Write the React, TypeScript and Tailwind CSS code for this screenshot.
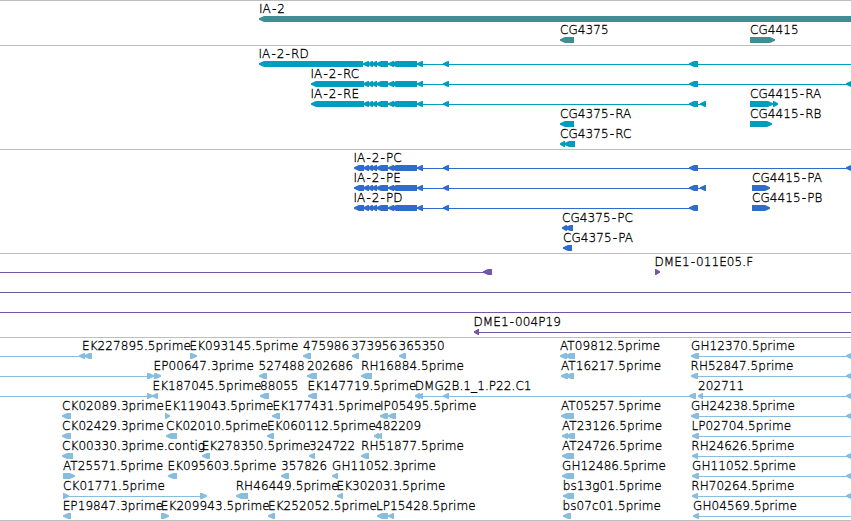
type Strand = "<" | ">";
type Block = [Strand, number, number];

interface Row {
  labels?: [number, string][];
  lines?: [number, number][];
  blocks?: Block[];
}

interface Track {
  name: string;
  color: string;
  className: string;
  rows: Row[];
}

const WIDTH = 851;

// exons shared by every IA-2 transcript
const ia2Exons: Block[] = [
  ["<", 363, 369],
  ["<", 367.5, 373],
  ["<", 371.5, 377],
  ["<", 376, 388],
  ["<", 388, 394],
  ["<", 391, 417],
  ["<", 417, 423],
  ["<", 443, 449],
];

const edge: Block = ["<", 846, 853];

const tracks: Track[] = [
  {
    name: "genes",
    color: "#3e8e94",
    className: "gap-px pb-[3px]",
    rows: [
      { labels: [[259, "IA-2"]], blocks: [["<", 259, 860]] },
      {
        labels: [[560, "CG4375"], [750, "CG4415"]],
        blocks: [["<", 560, 574], [">", 750, 775]],
      },
    ],
  },
  {
    name: "transcripts",
    color: "#009dbe",
    className: "pb-[3px]",
    rows: [
      {
        labels: [[258.5, "IA-2-RD"]],
        lines: [[363, WIDTH]],
        blocks: [["<", 259, 363], ...ia2Exons, ["<", 689, 698]],
      },
      {
        labels: [[310.5, "IA-2-RC"]],
        lines: [[363, WIDTH]],
        blocks: [["<", 311, 364], ...ia2Exons, ["<", 689, 698], edge],
      },
      {
        labels: [[310.5, "IA-2-RE"], [750, "CG4415-RA"]],
        lines: [[363, 706]],
        blocks: [["<", 311, 364], ...ia2Exons, ["<", 689, 698], ["<", 700, 706], [">", 750, 773], [">", 773, 778]],
      },
      {
        labels: [[560, "CG4375-RA"], [750, "CG4415-RB"]],
        blocks: [["<", 560, 574], [">", 750, 772]],
      },
      {
        labels: [[560, "CG4375-RC"]],
        blocks: [["<", 560, 565], ["<", 564, 575]],
      },
    ],
  },
  {
    name: "proteins",
    color: "#2f6ccc",
    className: "pb-[3px]",
    rows: [
      {
        labels: [[353.5, "IA-2-PC"]],
        lines: [[363, WIDTH]],
        blocks: [["<", 354, 364], ...ia2Exons, ["<", 689, 698], edge],
      },
      {
        labels: [[353.5, "IA-2-PE"], [752, "CG4415-PA"]],
        lines: [[363, 706]],
        blocks: [["<", 354, 364], ...ia2Exons, ["<", 689, 698], ["<", 700, 706], [">", 752, 770]],
      },
      {
        labels: [[353.5, "IA-2-PD"], [752, "CG4415-PB"]],
        lines: [[363, 698]],
        blocks: [["<", 354, 364], ...ia2Exons, ["<", 689, 698], [">", 752, 770]],
      },
      { labels: [[562, "CG4375-PC"]], blocks: [["<", 562, 567], ["<", 565, 573]] },
      { labels: [[563, "CG4375-PA"]], blocks: [["<", 563, 572]] },
    ],
  },
  {
    name: "bac-ends",
    color: "#7557a8",
    className: "pb-[3px]",
    rows: [
      {
        labels: [[654.5, "DME1-011E05.F"]],
        lines: [[0, 484]],
        blocks: [["<", 483, 492], [">", 655, 660]],
      },
      { lines: [[0, WIDTH]] },
      { lines: [[0, WIDTH]] },
      {
        labels: [[473.5, "DME1-004P19"]],
        lines: [[476, WIDTH]],
        blocks: [["<", 474, 479]],
      },
    ],
  },
  {
    name: "ests",
    color: "#88bddd",
    className: "pb-[2px]",
    rows: [
      {
        labels: [[82, "EK227895.5prime"], [189.5, "EK093145.5prime"], [303, "475986"], [351, "373956"], [398.5, "365350"], [560, "AT09812.5prime"], [691, "GH12370.5prime"]],
        lines: [[0, 82], [695, WIDTH]],
        blocks: [["<", 79, 85], ["<", 84, 92], [">", 190, 197], ["<", 303, 311], ["<", 352, 359], ["<", 399, 406], ["<", 560, 567], ["<", 565, 575], ["<", 691, 699], edge],
      },
      {
        labels: [[153.5, "EP00647.3prime"], [258.5, "527488"], [307, "202686"], [361, "RH16884.5prime"], [561, "AT16217.5prime"], [690.5, "RH52847.5prime"]],
        lines: [[0, 149], [695, WIDTH]],
        blocks: [[">", 147, 154], [">", 154, 161], ["<", 259, 267], ["<", 307, 317], ["<", 361, 372], ["<", 561, 568], ["<", 566, 574], ["<", 691, 698], edge],
      },
      {
        labels: [[152.5, "EK187045.5prime"], [260, "88055"], [307.5, "EK147719.5prime"], [414.7, "DMG2B.1_1.P22.C1"], [698, "202711"]],
        lines: [[0, 149], [418, 694], [701, WIDTH]],
        blocks: [[">", 147, 153], ["<", 152, 158], ["<", 260, 269], ["<", 308, 317], ["<", 415, 420], ["<", 418, 423], ["<", 443, 449], ["<", 689, 696], ["<", 698, 703], edge],
      },
      {
        labels: [[62, "CK02089.3prime"], [164.5, "EK119043.5prime"], [272.5, "EK177431.5prime"], [380, "IP05495.5prime"], [561, "AT05257.5prime"], [691, "GH24238.5prime"]],
        lines: [[695, WIDTH]],
        blocks: [["<", 62, 71], [">", 165, 170], ["<", 272, 280], ["<", 380, 388], ["<", 388, 396], ["<", 561, 574], ["<", 691, 699], edge],
      },
      {
        labels: [[62, "CK02429.3prime"], [166, "CK02010.5prime"], [267, "EK060112.5prime"], [375, "482209"], [562, "AT23126.5prime"], [691.5, "LP02704.5prime"]],
        lines: [[695, WIDTH]],
        blocks: [["<", 62, 71], ["<", 166, 177], ["<", 267, 274], ["<", 374, 379], ["<", 377, 382], ["<", 562, 568], ["<", 566, 575], ["<", 692, 699]],
      },
      {
        labels: [[62, "CK00330.3prime.contig"], [201.7, "EK278350.5prime"], [309, "324722"], [361, "RH51877.5prime"], [562, "AT24726.5prime"], [691.3, "RH24626.5prime"]],
        lines: [[695, WIDTH]],
        blocks: [["<", 62, 73], ["<", 202, 210], ["<", 309, 315], ["<", 361, 369], ["<", 562, 574], ["<", 692, 698], edge],
      },
      {
        labels: [[63, "AT25571.5prime"], [167.5, "EK095603.5prime"], [281, "357826"], [332, "GH11052.3prime"], [562, "GH12486.5prime"], [692, "GH11052.5prime"]],
        lines: [[695, WIDTH]],
        blocks: [[">", 63, 75], ["<", 168, 177], ["<", 281, 289], ["<", 332, 338], ["<", 562, 574], ["<", 692, 699], edge],
      },
      {
        labels: [[63, "CK01771.5prime"], [235.7, "RH46449.5prime"], [336.5, "EK302031.5prime"], [562.7, "bs13g01.5prime"], [691.3, "RH70264.5prime"]],
        lines: [[65, 204], [695, WIDTH]],
        blocks: [[">", 63, 69], [">", 200, 207], ["<", 236, 248], ["<", 337, 343], ["<", 563, 574], ["<", 692, 698], edge],
      },
      {
        labels: [[62.7, "EP19847.3prime"], [160.8, "EK209943.5prime"], [268, "EK252052.5prime"], [376, "LP15428.5prime"], [562.5, "bs07c01.5prime"], [693, "GH04569.5prime"]],
        lines: [[696, WIDTH]],
        blocks: [["<", 63, 71], [">", 161, 169], ["<", 268, 275], ["<", 377, 388], ["<", 388, 394], ["<", 563, 571], ["<", 693, 699]],
      },
    ],
  },
];

// block with a blunt arrow head on the side the strand runs to
function points([strand, x0, x1]: Block) {
  const head = Math.min(5, x1 - x0 - 1);
  if (strand === "<") {
    return `${x0},2.3 ${x0 + head},0 ${x1},0 ${x1},6 ${x0 + head},6 ${x0},3.7`;
  }
  return `${x1},2.3 ${x1 - head},0 ${x0},0 ${x0},6 ${x1 - head},6 ${x1},3.7`;
}

function Label({ x, text }: { x: number; text: string }) {
  return (
    <span
      className="absolute top-px text-[12px] leading-[14px] font-extralight tracking-[0.08px] whitespace-nowrap text-black [-webkit-text-stroke:0.3px_black]"
      style={{ left: x }}
    >
      {text.split("-").map((part, i) => (
        <span key={i}>
          {i > 0 && <span className="px-px">-</span>}
          {part}
        </span>
      ))}
    </span>
  );
}

function FeatureRow({ row, color }: { row: Row; color: string }) {
  return (
    <div className="relative h-5 shrink-0 pt-[15px]">
      <svg width={WIDTH} height={6} viewBox={`0 0 ${WIDTH} 6`} fill={color} className="block">
        {row.lines?.map(([x0, x1]) => (
          <rect key={x0} x={x0} y={3} width={x1 - x0} height={1} />
        ))}
        {row.blocks?.map((block) => (
          <polygon key={block[1]} points={points(block)} />
        ))}
      </svg>
      {row.labels?.map(([x, text]) => (
        <Label key={x} x={x} text={text} />
      ))}
    </div>
  );
}

export default function App() {
  return (
    <main className="h-[521px] w-[851px] overflow-hidden border-t border-[#bebebe] bg-white font-['DejaVu_Sans',sans-serif]">
      {tracks.map((track) => (
        <section key={track.name} className={`flex flex-col border-b border-[#bebebe] ${track.className}`}>
          {track.rows.map((row, i) => (
            <FeatureRow key={i} row={row} color={track.color} />
          ))}
        </section>
      ))}
    </main>
  );
}
